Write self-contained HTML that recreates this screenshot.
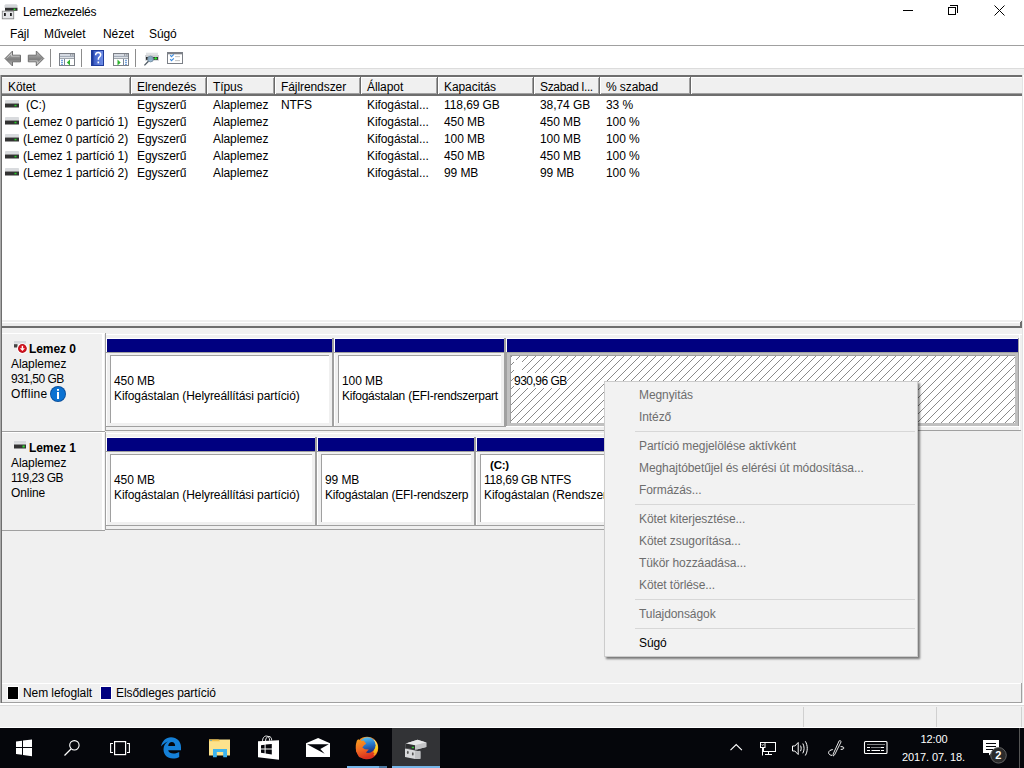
<!DOCTYPE html>
<html><head><meta charset="utf-8">
<style>
*{margin:0;padding:0;box-sizing:border-box}
html,body{width:1024px;height:768px;overflow:hidden;background:#f0f0f0;font-family:"Liberation Sans",sans-serif;font-size:12px;color:#000}
.a{position:absolute}
.t{position:absolute;font-size:12px;line-height:12px;white-space:nowrap;letter-spacing:-0.08px}
.b{font-weight:bold}
.hl{position:absolute;height:1px}
.vl{position:absolute;width:1px}
</style></head><body>
<!-- title bar + menu + toolbar -->
<div class="a" style="left:0;top:0;width:1024px;height:68px;background:#fff"></div>
<div id="title">
<svg class="a" style="left:0;top:0" width="20" height="20" viewBox="0 0 20 20">
 <path d="M5.5 4.2h11l1 1.3v2.5h-13v-2.5z" fill="#d3d5d8"/>
 <rect x="5" y="7.8" width="12.5" height="3" fill="#303030"/>
 <rect x="13.6" y="8.6" width="1.8" height="1.6" fill="#2ee02e"/>
 <rect x="2.3" y="11.2" width="11.4" height="7.6" fill="#e4e5e7" stroke="#8c8c8c" stroke-width="0.9"/>
 <rect x="4" y="13" width="1.8" height="3" fill="#1e1e1e"/>
 <rect x="10" y="13" width="1.8" height="3" fill="#1e1e1e"/>
</svg>
<div class="t" style="left:23px;top:6px;letter-spacing:-0.3px">Lemezkezelés</div>
<!-- window controls -->
<div class="hl" style="left:903px;top:10px;width:10px;background:#000"></div>
<div class="a" style="left:948px;top:7px;width:8px;height:8px;border:1px solid #000"></div>
<div class="a" style="left:950px;top:5px;width:8px;height:8px;border-top:1px solid #000;border-right:1px solid #000"></div>
<svg class="a" style="left:994px;top:5px" width="11" height="11" viewBox="0 0 11 11"><path d="M0.5 0.5L10.5 10.5M10.5 0.5L0.5 10.5" stroke="#000" stroke-width="1"/></svg>
</div>
<div id="menu">
<div class="t" style="left:10px;top:28px">Fájl</div>
<div class="t" style="left:44px;top:28px">Művelet</div>
<div class="t" style="left:103px;top:28px">Nézet</div>
<div class="t" style="left:149px;top:28px">Súgó</div>
</div>
<div class="hl" style="left:0;top:45px;width:1024px;background:#a0a0a0"></div>
<div class="hl" style="left:0;top:68px;width:1024px;background:#dcdcdc"></div>
<div id="toolbar">
<svg class="a" style="left:4px;top:50px" width="18" height="17" viewBox="0 0 18 17">
 <defs><linearGradient id="ag" x1="0" y1="0" x2="0" y2="1"><stop offset="0" stop-color="#c4c4c4"/><stop offset="0.55" stop-color="#7e7e7e"/><stop offset="1" stop-color="#bdbdbd"/></linearGradient></defs>
 <path d="M1 8.5L8.5 1V5.2H16.5V11.8H8.5V16z" fill="url(#ag)" stroke="#6f6f6f" stroke-width="1" stroke-linejoin="round"/><path d="M2.6 8.5L7.5 3.5V6.2H15.5" fill="none" stroke="#fff" stroke-opacity="0.55" stroke-width="0.7"/>
</svg>
<svg class="a" style="left:27px;top:50px" width="18" height="17" viewBox="0 0 18 17">
 <path d="M16.8 8.5L9.3 1V5.2H1.3V11.8H9.3V16z" fill="url(#ag)" stroke="#6f6f6f" stroke-width="1" stroke-linejoin="round"/><path d="M15.2 8.5L10.3 13.5V10.8H2.3" fill="none" stroke="#fff" stroke-opacity="0.55" stroke-width="0.7"/>
</svg>
<div class="vl" style="left:50px;top:49px;height:18px;background:#8c8c8c"></div>
<svg class="a" style="left:59px;top:53px" width="17" height="14" viewBox="0 0 17 14">
 <rect x="0.5" y="0.5" width="15" height="12" fill="#fff" stroke="#7c8087"/>
 <rect x="1" y="1" width="14" height="2" fill="#d5dae2"/><rect x="11" y="1.3" width="1.3" height="1.3" fill="#7c8087"/><rect x="13.2" y="1.3" width="1.3" height="1.3" fill="#7c8087"/>
 <rect x="1" y="3" width="14" height="0.8" fill="#7f8a9a"/><rect x="1" y="3.8" width="14" height="1.4" fill="#dfe3e8"/><rect x="1" y="5.2" width="14" height="0.8" fill="#8a929c"/>
 <rect x="5" y="6" width="1" height="7" fill="#76849a"/>
 <rect x="2" y="6.8" width="2" height="0.9" fill="#3d7fd1"/><rect x="2" y="8.8" width="2" height="0.9" fill="#3d7fd1"/><rect x="2" y="10.8" width="2" height="0.9" fill="#3d7fd1"/>
 <path d="M11 6.5v6l-3.2-3z" fill="#2fb52f"/>
</svg>
<div class="vl" style="left:81px;top:49px;height:18px;background:#8c8c8c"></div>
<svg class="a" style="left:91px;top:50px" width="14" height="17" viewBox="0 0 14 17">
 <defs><linearGradient id="hg" x1="0" y1="0" x2="1" y2="0"><stop offset="0" stop-color="#3b5cc4"/><stop offset="1" stop-color="#6f8ee6"/></linearGradient></defs>
 <rect x="0" y="0" width="13" height="16" fill="#1f3c9c"/>
 <rect x="2.5" y="1" width="9.5" height="14" fill="url(#hg)"/>
 <path d="M4.6 5.2c0-1.8 1.1-2.8 2.6-2.8c1.5 0 2.5 1 2.5 2.4c0 1.2-0.6 1.8-1.4 2.4c-0.7 0.5-0.9 0.9-0.9 1.8v0.8" fill="none" stroke="#fff" stroke-width="1.5"/>
 <rect x="6.5" y="11.5" width="1.6" height="1.8" fill="#fff"/>
</svg>
<svg class="a" style="left:113px;top:53px" width="17" height="14" viewBox="0 0 17 14">
 <rect x="0.5" y="0.5" width="15" height="12" fill="#fff" stroke="#7c8087"/>
 <rect x="1" y="1" width="14" height="2" fill="#d5dae2"/><rect x="11" y="1.3" width="1.3" height="1.3" fill="#7c8087"/><rect x="13.2" y="1.3" width="1.3" height="1.3" fill="#7c8087"/>
 <rect x="1" y="3" width="14" height="0.8" fill="#7f8a9a"/><rect x="1" y="3.8" width="14" height="1.4" fill="#dfe3e8"/><rect x="1" y="5.2" width="14" height="0.8" fill="#8a929c"/>
 <rect x="10" y="6" width="1" height="7" fill="#76849a"/>
 <rect x="12" y="6.8" width="2" height="0.9" fill="#3d7fd1"/><rect x="12" y="8.8" width="2" height="0.9" fill="#3d7fd1"/><rect x="12" y="10.8" width="2" height="0.9" fill="#3d7fd1"/>
 <path d="M4.5 6.5v6l3.2-3z" fill="#2fb52f"/>
</svg>
<div class="vl" style="left:135px;top:49px;height:18px;background:#8c8c8c"></div>
<svg class="a" style="left:140px;top:48px" width="48" height="20" viewBox="0 0 48 20">
 <rect x="6" y="4.7" width="12" height="2.5" fill="#dfe1e3"/>
 <rect x="5" y="7" width="14" height="5.7" fill="#cfd1d4"/>
 <rect x="6" y="9" width="12" height="2.8" fill="#2a2a2a"/>
 <path d="M14.2 10.4h3M15.7 9v2.8" stroke="#2de02d" stroke-width="1.1"/>
 <circle cx="10.5" cy="11" r="2.9" fill="#8fb4cf" fill-opacity="0.9" stroke="#6d8597" stroke-width="0.8"/>
 <path d="M8.4 13.2L4.4 17.4" stroke="#4f5a63" stroke-width="1.3"/>
 <rect x="27.5" y="4.5" width="15" height="11" fill="#fff" stroke="#7c8087"/>
 <rect x="28" y="5" width="14" height="1.3" fill="#7c8087"/>
 <path d="M30.2 7.2l1.3 1.5l2.3-2.4M30.2 11.2l1.3 1.5l2.3-2.4" stroke="#3d8ce0" fill="none" stroke-width="1.1"/>
 <rect x="35" y="8.2" width="5" height="0.9" fill="#bdbdbd"/><rect x="35" y="12.2" width="5" height="0.9" fill="#bdbdbd"/>
</svg>
</div>


<!-- list view -->
<div class="a" style="left:1px;top:75px;width:1022px;height:253px;background:#fff;border-top:2px solid #6e6e6e;border-left:1px solid #6e6e6e;border-right:1px solid #dcdcdc"></div>
<div class="a" style="left:2px;top:77px;width:1020px;height:19px;background:#f0f0f0;border-top:1px solid #fff;border-bottom:2px solid #6e6e6e"></div>
<div id="hdr">
<div class="hl" style="left:2px;top:93px;width:1020px;background:#a0a0a0"></div>
<div class="t" style="left:8px;top:81px">Kötet</div>
<div class="t" style="left:137px;top:81px">Elrendezés</div>
<div class="t" style="left:213px;top:81px">Típus</div>
<div class="t" style="left:281px;top:81px">Fájlrendszer</div>
<div class="t" style="left:367px;top:81px">Állapot</div>
<div class="t" style="left:444px;top:81px">Kapacitás</div>
<div class="t" style="left:540px;top:81px;letter-spacing:-0.35px">Szabad l...</div>
<div class="t" style="left:606px;top:81px">% szabad</div>
<div class="vl" style="left:129px;top:78px;height:16px;background:#a0a0a0"></div><div class="vl" style="left:130px;top:77px;height:18px;background:#696969"></div><div class="vl" style="left:131px;top:77px;height:17px;background:#fff"></div>
<div class="vl" style="left:205px;top:78px;height:16px;background:#a0a0a0"></div><div class="vl" style="left:206px;top:77px;height:18px;background:#696969"></div><div class="vl" style="left:207px;top:77px;height:17px;background:#fff"></div>
<div class="vl" style="left:273px;top:78px;height:16px;background:#a0a0a0"></div><div class="vl" style="left:274px;top:77px;height:18px;background:#696969"></div><div class="vl" style="left:275px;top:77px;height:17px;background:#fff"></div>
<div class="vl" style="left:359px;top:78px;height:16px;background:#a0a0a0"></div><div class="vl" style="left:360px;top:77px;height:18px;background:#696969"></div><div class="vl" style="left:361px;top:77px;height:17px;background:#fff"></div>
<div class="vl" style="left:436px;top:78px;height:16px;background:#a0a0a0"></div><div class="vl" style="left:437px;top:77px;height:18px;background:#696969"></div><div class="vl" style="left:438px;top:77px;height:17px;background:#fff"></div>
<div class="vl" style="left:532px;top:78px;height:16px;background:#a0a0a0"></div><div class="vl" style="left:533px;top:77px;height:18px;background:#696969"></div><div class="vl" style="left:534px;top:77px;height:17px;background:#fff"></div>
<div class="vl" style="left:598px;top:78px;height:16px;background:#a0a0a0"></div><div class="vl" style="left:599px;top:77px;height:18px;background:#696969"></div><div class="vl" style="left:600px;top:77px;height:17px;background:#fff"></div>
<div class="vl" style="left:689px;top:78px;height:16px;background:#a0a0a0"></div><div class="vl" style="left:690px;top:77px;height:18px;background:#696969"></div><div class="vl" style="left:691px;top:77px;height:17px;background:#fff"></div>
</div>
<div id="rows">
<svg class="a" style="left:5px;top:100px" width="14" height="8" viewBox="0 0 14 8"><rect x="0" y="0" width="14" height="3.5" rx="0.8" fill="#d9dbde"/><rect x="0" y="3.5" width="14" height="4" fill="#333"/><rect x="9.5" y="4.8" width="2" height="1.5" fill="#22d022"/></svg>
<div class="t" style="left:26px;top:99px">(C:)</div>
<div class="t" style="left:137px;top:99px">Egyszerű</div>
<div class="t" style="left:213px;top:99px">Alaplemez</div>
<div class="t" style="left:281px;top:99px">NTFS</div>
<div class="t" style="left:367px;top:99px">Kifogástal...</div>
<div class="t" style="left:444px;top:99px">118,69 GB</div>
<div class="t" style="left:540px;top:99px">38,74 GB</div>
<div class="t" style="left:606px;top:99px">33 %</div>
<svg class="a" style="left:5px;top:117px" width="14" height="8" viewBox="0 0 14 8"><rect x="0" y="0" width="14" height="3.5" rx="0.8" fill="#d9dbde"/><rect x="0" y="3.5" width="14" height="4" fill="#333"/><rect x="9.5" y="4.8" width="2" height="1.5" fill="#22d022"/></svg>
<div class="t" style="left:23px;top:116px">(Lemez 0 partíció 1)</div>
<div class="t" style="left:137px;top:116px">Egyszerű</div>
<div class="t" style="left:213px;top:116px">Alaplemez</div>
<div class="t" style="left:367px;top:116px">Kifogástal...</div>
<div class="t" style="left:444px;top:116px">450 MB</div>
<div class="t" style="left:540px;top:116px">450 MB</div>
<div class="t" style="left:606px;top:116px">100 %</div>
<svg class="a" style="left:5px;top:134px" width="14" height="8" viewBox="0 0 14 8"><rect x="0" y="0" width="14" height="3.5" rx="0.8" fill="#d9dbde"/><rect x="0" y="3.5" width="14" height="4" fill="#333"/><rect x="9.5" y="4.8" width="2" height="1.5" fill="#22d022"/></svg>
<div class="t" style="left:23px;top:133px">(Lemez 0 partíció 2)</div>
<div class="t" style="left:137px;top:133px">Egyszerű</div>
<div class="t" style="left:213px;top:133px">Alaplemez</div>
<div class="t" style="left:367px;top:133px">Kifogástal...</div>
<div class="t" style="left:444px;top:133px">100 MB</div>
<div class="t" style="left:540px;top:133px">100 MB</div>
<div class="t" style="left:606px;top:133px">100 %</div>
<svg class="a" style="left:5px;top:151px" width="14" height="8" viewBox="0 0 14 8"><rect x="0" y="0" width="14" height="3.5" rx="0.8" fill="#d9dbde"/><rect x="0" y="3.5" width="14" height="4" fill="#333"/><rect x="9.5" y="4.8" width="2" height="1.5" fill="#22d022"/></svg>
<div class="t" style="left:23px;top:150px">(Lemez 1 partíció 1)</div>
<div class="t" style="left:137px;top:150px">Egyszerű</div>
<div class="t" style="left:213px;top:150px">Alaplemez</div>
<div class="t" style="left:367px;top:150px">Kifogástal...</div>
<div class="t" style="left:444px;top:150px">450 MB</div>
<div class="t" style="left:540px;top:150px">450 MB</div>
<div class="t" style="left:606px;top:150px">100 %</div>
<svg class="a" style="left:5px;top:168px" width="14" height="8" viewBox="0 0 14 8"><rect x="0" y="0" width="14" height="3.5" rx="0.8" fill="#d9dbde"/><rect x="0" y="3.5" width="14" height="4" fill="#333"/><rect x="9.5" y="4.8" width="2" height="1.5" fill="#22d022"/></svg>
<div class="t" style="left:23px;top:167px">(Lemez 1 partíció 2)</div>
<div class="t" style="left:137px;top:167px">Egyszerű</div>
<div class="t" style="left:213px;top:167px">Alaplemez</div>
<div class="t" style="left:367px;top:167px">Kifogástal...</div>
<div class="t" style="left:444px;top:167px">99 MB</div>
<div class="t" style="left:540px;top:167px">99 MB</div>
<div class="t" style="left:606px;top:167px">100 %</div>
</div>

<!-- graphical view -->
<div id="graph">
<div class="hl" style="left:2px;top:320px;width:1020px;background:#efefef"></div>
<div class="hl" style="left:2px;top:321px;width:1020px;background:#efefef"></div>
<div class="hl" style="left:2px;top:322px;width:1021px;background:#fff"></div>
<div class="a" style="left:2px;top:323px;width:1020px;height:3px;background:#ececec;"></div>
<div class="vl" style="left:1020px;top:322px;height:5px;background:#6e6e6e"></div>
<div class="vl" style="left:1021px;top:321px;height:6px;background:#6e6e6e"></div>
<div class="a" style="left:0px;top:326px;width:1022px;height:2px;background:#6e6e6e;"></div>
<div class="vl" style="left:0px;top:75px;height:629px;background:#a9a9a9"></div>
<div class="vl" style="left:1px;top:75px;height:629px;background:#6e6e6e"></div>
<div class="vl" style="left:1022px;top:75px;height:629px;background:#e3e3e3"></div>
<div class="vl" style="left:1023px;top:75px;height:629px;background:#fff"></div>
<div class="hl" style="left:2px;top:702px;width:1020px;background:#a0a0a0"></div>
<div class="hl" style="left:0px;top:703px;width:1024px;background:#fff"></div>
<div class="hl" style="left:0px;top:704px;width:1024px;background:#fff"></div>
<div class="hl" style="left:0px;top:705px;width:1024px;background:#dcdcdc"></div>
<div class="hl" style="left:2px;top:333px;width:103px;background:#fff"></div>
<div class="a" style="left:2px;top:334px;width:102px;height:97px;background:#f0f0f0;"></div>
<div class="vl" style="left:102px;top:334px;height:97px;background:#fff"></div>
<div class="vl" style="left:103px;top:334px;height:97px;background:#fff"></div>
<div class="hl" style="left:2px;top:431px;width:103px;background:#a0a0a0"></div>
<div class="hl" style="left:2px;top:432px;width:103px;background:#fff"></div>
<div class="vl" style="left:105px;top:333px;height:98px;background:#a0a0a0"></div>
<div class="hl" style="left:106px;top:334px;width:916px;background:#fff"></div>
<div class="hl" style="left:105px;top:430px;width:916px;background:#a0a0a0"></div>
<div class="vl" style="left:1019px;top:334px;height:96px;background:#fff"></div>
<svg class="a" style="left:13px;top:340px" width="16" height="15" viewBox="0 0 16 15"><rect x="1" y="1" width="12" height="2.6" fill="#d6d8dc"/><rect x="1" y="4.2" width="3.5" height="3.3" fill="#444"/><circle cx="9.4" cy="8.5" r="5.3" fill="#fff"/><circle cx="9.4" cy="8.5" r="4.4" fill="#b8101c"/><circle cx="9.4" cy="8.3" r="3.4" fill="#d8141f"/><rect x="8.7" y="5.8" width="1.4" height="3" fill="#fff"/><path d="M6.9 8.2H11.9L9.4 10.9z" fill="#fff"/></svg>
<div class="t" style="left:29px;top:343px;font-weight:bold">Lemez 0</div>
<div class="t" style="left:11px;top:358px;">Alaplemez</div>
<div class="t" style="left:11px;top:373px;letter-spacing:-0.5px">931,50 GB</div>
<div class="t" style="left:11px;top:388px;letter-spacing:0.3px">Offline</div>
<svg class="a" style="left:50px;top:386px" width="16" height="16" viewBox="0 0 16 16"><circle cx="8" cy="8" r="8" fill="#0a4f9c"/><circle cx="8" cy="8" r="7.1" fill="#0b72d2"/><rect x="7" y="6" width="2" height="7" fill="#fff"/><rect x="7" y="3" width="2" height="1.8" fill="#fff"/></svg>
<div class="hl" style="left:106px;top:338px;width:226px;background:#fff"></div>
<div class="vl" style="left:106px;top:338px;height:15px;background:#fff"></div>
<div class="a" style="left:107px;top:339px;width:225px;height:13px;background:#000080;"></div>
<div class="hl" style="left:106px;top:352px;width:228px;background:#a0a0a0"></div>
<div class="a" style="left:332px;top:338px;width:2px;height:89px;background:#a0a0a0;"></div>
<div class="vl" style="left:106px;top:353px;height:73px;background:#fff"></div>
<div class="hl" style="left:106px;top:426px;width:228px;background:#a0a0a0"></div>
<div class="a" style="left:110px;top:355px;width:219px;height:68px;background:#fff;border-top:1px solid #a0a0a0;border-left:1px solid #a0a0a0;overflow:hidden"><div class="t" style="left:3px;top:19px;">450 MB</div><div class="t" style="left:3px;top:34px;">Kifogástalan (Helyreállítási partíció)</div></div>
<div class="hl" style="left:334px;top:338px;width:170px;background:#fff"></div>
<div class="vl" style="left:334px;top:338px;height:15px;background:#fff"></div>
<div class="a" style="left:335px;top:339px;width:169px;height:13px;background:#000080;"></div>
<div class="hl" style="left:334px;top:352px;width:172px;background:#a0a0a0"></div>
<div class="a" style="left:504px;top:338px;width:2px;height:89px;background:#a0a0a0;"></div>
<div class="vl" style="left:334px;top:353px;height:73px;background:#fff"></div>
<div class="hl" style="left:334px;top:426px;width:172px;background:#a0a0a0"></div>
<div class="a" style="left:338px;top:355px;width:163px;height:68px;background:#fff;border-top:1px solid #a0a0a0;border-left:1px solid #a0a0a0;overflow:hidden"><div class="t" style="left:3px;top:19px;">100 MB</div><div class="t" style="left:3px;top:34px;"><span style="letter-spacing:-0.25px">Kifogástalan (EFI-rendszerpart</span></div></div>
<div class="hl" style="left:506px;top:338px;width:512px;background:#fff"></div>
<div class="vl" style="left:506px;top:338px;height:15px;background:#fff"></div>
<div class="a" style="left:507px;top:339px;width:511px;height:13px;background:#000080;"></div>
<div class="hl" style="left:506px;top:352px;width:513px;background:#a0a0a0"></div>
<div class="a" style="left:1018px;top:338px;width:1px;height:89px;background:#a0a0a0;"></div>
<div class="a" style="left:506px;top:353px;width:512px;height:73px;background:#c0c0c0;"></div>
<div class="vl" style="left:506px;top:353px;height:73px;background:#a0a0a0"></div>
<div class="hl" style="left:506px;top:426px;width:513px;background:#fff"></div>
<svg class="a" style="left:510px;top:355px" width="505" height="68"><defs><pattern id="hatch" width="8" height="8" patternUnits="userSpaceOnUse" x="6" y="5"><path d="M0 8L8 0" stroke="#8a8a8a" stroke-width="1" shape-rendering="crispEdges" stroke-dasharray="1 0.5"/></pattern></defs><rect width="505" height="68" fill="#fff"/><rect width="505" height="68" fill="url(#hatch)"/><rect x="0" y="0" width="505" height="1" fill="#a0a0a0"/><rect x="0" y="0" width="1" height="68" fill="#a0a0a0"/></svg>
<div class="a" style="left:514px;top:373px;width:53px;height:15px;background:#fff;"></div>
<div class="a" style="left:514px;top:360px;width:8px;height:13px;background:#fff;"></div>
<div class="t" style="left:514px;top:375px;letter-spacing:-0.5px">930,96 GB</div>
<div class="hl" style="left:2px;top:432px;width:103px;background:#fff"></div>
<div class="a" style="left:2px;top:433px;width:102px;height:97px;background:#f0f0f0;"></div>
<div class="vl" style="left:102px;top:433px;height:97px;background:#fff"></div>
<div class="vl" style="left:103px;top:433px;height:97px;background:#fff"></div>
<div class="hl" style="left:2px;top:530px;width:103px;background:#a0a0a0"></div>

<div class="vl" style="left:105px;top:432px;height:98px;background:#a0a0a0"></div>
<div class="hl" style="left:106px;top:433px;width:800px;background:#fff"></div>
<div class="hl" style="left:105px;top:529px;width:779px;background:#a0a0a0"></div>
<svg class="a" style="left:13px;top:440px" width="14" height="10" viewBox="0 0 14 10"><rect x="1" y="1" width="12" height="3.5" fill="#d8dadd"/><rect x="0.5" y="3.5" width="13" height="1" fill="#e6e7e9"/><rect x="1" y="4.5" width="12" height="4" fill="#333"/><rect x="9.5" y="5.5" width="2.2" height="2" fill="#30e030"/></svg>
<div class="t" style="left:29px;top:442px;font-weight:bold">Lemez 1</div>
<div class="t" style="left:11px;top:457px;">Alaplemez</div>
<div class="t" style="left:11px;top:472px;letter-spacing:-0.5px">119,23 GB</div>
<div class="t" style="left:11px;top:487px;">Online</div>
<div class="hl" style="left:106px;top:437px;width:209px;background:#fff"></div>
<div class="vl" style="left:106px;top:437px;height:15px;background:#fff"></div>
<div class="a" style="left:107px;top:438px;width:208px;height:13px;background:#000080;"></div>
<div class="hl" style="left:106px;top:451px;width:211px;background:#a0a0a0"></div>
<div class="a" style="left:315px;top:437px;width:2px;height:89px;background:#a0a0a0;"></div>
<div class="vl" style="left:106px;top:452px;height:73px;background:#fff"></div>
<div class="hl" style="left:106px;top:525px;width:211px;background:#a0a0a0"></div>
<div class="a" style="left:110px;top:454px;width:202px;height:68px;background:#fff;border-top:1px solid #a0a0a0;border-left:1px solid #a0a0a0;overflow:hidden"><div class="t" style="left:3px;top:19px;">450 MB</div><div class="t" style="left:3px;top:34px;">Kifogástalan (Helyreállítási partíció)</div></div>
<div class="hl" style="left:317px;top:437px;width:157px;background:#fff"></div>
<div class="vl" style="left:317px;top:437px;height:15px;background:#fff"></div>
<div class="a" style="left:318px;top:438px;width:156px;height:13px;background:#000080;"></div>
<div class="hl" style="left:317px;top:451px;width:159px;background:#a0a0a0"></div>
<div class="a" style="left:474px;top:437px;width:2px;height:89px;background:#a0a0a0;"></div>
<div class="vl" style="left:317px;top:452px;height:73px;background:#fff"></div>
<div class="hl" style="left:317px;top:525px;width:159px;background:#a0a0a0"></div>
<div class="a" style="left:321px;top:454px;width:150px;height:68px;background:#fff;border-top:1px solid #a0a0a0;border-left:1px solid #a0a0a0;overflow:hidden"><div class="t" style="left:3px;top:19px;">99 MB</div><div class="t" style="left:3px;top:34px;"><span style="letter-spacing:-0.23px">Kifogástalan (EFI-rendszerp</span></div></div>
<div class="hl" style="left:476px;top:437px;width:405px;background:#fff"></div>
<div class="vl" style="left:476px;top:437px;height:15px;background:#fff"></div>
<div class="a" style="left:477px;top:438px;width:404px;height:13px;background:#000080;"></div>
<div class="hl" style="left:476px;top:451px;width:406px;background:#a0a0a0"></div>
<div class="a" style="left:881px;top:437px;width:1px;height:89px;background:#a0a0a0;"></div>
<div class="vl" style="left:476px;top:452px;height:73px;background:#fff"></div>
<div class="hl" style="left:476px;top:525px;width:406px;background:#a0a0a0"></div>
<div class="a" style="left:480px;top:454px;width:398px;height:68px;background:#fff;border-top:1px solid #a0a0a0;border-left:1px solid #a0a0a0;overflow:hidden"><div class="t" style="left:9px;top:4px;font-weight:bold;font-size:11.5px;letter-spacing:-0.2px">(C:)</div><div class="t" style="left:3px;top:19px;"><span style="letter-spacing:-0.3px">118,69 GB NTFS</span></div><div class="t" style="left:3px;top:34px;">Kifogástalan (Rendszerindító, Lapozófájl, Összeomlási memóriakép, Elsődleges partíció)</div></div>
</div>
<!-- legend/status -->
<div id="status">
<div class="hl" style="left:2px;top:683px;width:1019px;background:#fff"></div>
<div class="vl" style="left:1021px;top:683px;height:20px;background:#a0a0a0"></div>
<div class="a" style="left:7px;top:686px;width:12px;height:14px;background:#fff;"></div>
<div class="a" style="left:8px;top:687px;width:10px;height:12px;background:#000;"></div>
<div class="t" style="left:23px;top:687px;">Nem lefoglalt</div>
<div class="a" style="left:100px;top:686px;width:12px;height:14px;background:#fff;"></div>
<div class="a" style="left:101px;top:687px;width:10px;height:12px;background:#000080;"></div>
<div class="t" style="left:116px;top:687px;">Elsődleges partíció</div>
<div class="vl" style="left:803px;top:707px;height:20px;background:#d0d0d0"></div>
<div class="vl" style="left:936px;top:707px;height:20px;background:#d0d0d0"></div>
<div class="vl" style="left:1021px;top:707px;height:20px;background:#d0d0d0"></div>
<div class="hl" style="left:0px;top:727px;width:1024px;background:#fff"></div>
</div>
<!-- context menu -->
<div id="ctx">
<div class="a" style="left:604px;top:381px;width:314px;height:276px;background:#f2f2f2;border:1px solid #cccccc;box-shadow:2px 2px 2px rgba(0,0,0,0.5)"></div>
<div class="t" style="left:639px;top:389px;color:#6d6d6d">Megnyitás</div>
<div class="t" style="left:639px;top:411px;color:#6d6d6d">Intéző</div>
<div class="hl" style="left:635px;top:431px;width:280px;background:#d7d7d7"></div>
<div class="t" style="left:639px;top:440px;color:#6d6d6d">Partíció megjelölése aktívként</div>
<div class="t" style="left:639px;top:462px;color:#6d6d6d">Meghajtóbetűjel és elérési út módosítása...</div>
<div class="t" style="left:639px;top:484px;color:#6d6d6d">Formázás...</div>
<div class="hl" style="left:635px;top:504px;width:280px;background:#d7d7d7"></div>
<div class="t" style="left:639px;top:513px;color:#6d6d6d">Kötet kiterjesztése...</div>
<div class="t" style="left:639px;top:535px;color:#6d6d6d">Kötet zsugorítása...</div>
<div class="t" style="left:639px;top:557px;color:#6d6d6d">Tükör hozzáadása...</div>
<div class="t" style="left:639px;top:579px;color:#6d6d6d">Kötet törlése...</div>
<div class="hl" style="left:635px;top:599px;width:280px;background:#d7d7d7"></div>
<div class="t" style="left:639px;top:608px;color:#6d6d6d">Tulajdonságok</div>
<div class="hl" style="left:635px;top:628px;width:280px;background:#d7d7d7"></div>
<div class="t" style="left:639px;top:637px;color:#000">Súgó</div>
</div>
<!-- taskbar -->
<div class="a" style="left:0;top:728px;width:1024px;height:40px;background:#05060b"></div>
<div id="taskbar">
<svg class="a" style="left:0;top:728px" width="1024" height="40" viewBox="0 728 1024 40"><path d="M16 741.6L22 740.8V747H16z M23 740.6L32 739.6V747H23z M16 748H22V754.8L16 754z M23 748H32V756.2L23 755z" fill="#fff"/><circle cx="74.4" cy="745.3" r="4.7" fill="none" stroke="#fff" stroke-width="1.1"/><path d="M71 749L64.5 755.5" stroke="#fff" stroke-width="1.2"/><rect x="114.6" y="741.6" width="11" height="13" fill="none" stroke="#fff" stroke-width="1.2"/><path d="M113 743.5H110.6V752.5H113 M127 743.5H129.4V752.5H127" fill="none" stroke="#fff" stroke-width="1.1"/><g transform="translate(158 734)"><path fill-rule="evenodd" d="M13 3.3C18.8 3.3 23 7.5 23 13.2V16.2H10.2C10.6 18.6 13 19.5 15.5 19.5C17.8 19.5 19.8 18.8 21.2 18V23C19.5 24.1 17.2 24.6 15 24.6C9.2 24.6 5.5 20.6 5.5 15.3C5.5 11.5 7.5 9 10 7.5C7.5 8.2 5 10.2 3.1 12.4C4 7.2 8 3.3 13 3.3z M10.2 12C10.5 9.5 12 8 13.8 8C15.8 8 17 9.5 17.2 12z" fill="#1580d8"/></g><rect x="209" y="739.5" width="21" height="16" fill="#fde28c"/><path d="M209 739.5h9.5l1.5 1.7h-11z" fill="#f2c04a"/><rect x="210.2" y="740" width="1.6" height="0.9" fill="#49a6d6"/><path d="M213 757.2V749H227V757.2H223.2V752H216.8V757.2z" fill="#3db4ee"/><path d="M258 741.3L279 740.2V759.8L258 757.2z" fill="#fff"/><path d="M262.5 741.5c0-4 2-5.5 3.8-5.5c1.8 0 3.4 1.5 3.4 4.8 M265.5 741.2c0-3.3 1.8-4.8 3.4-4.8c1.7 0 2.8 1.6 2.8 4" fill="none" stroke="#fff" stroke-width="0.9"/><path d="M261 745.2L264.6 744.8V748.4H261z M265.6 744.6L271.8 744V748.4H265.6z M261 749.4H264.6V753.3L261 752.8z M265.6 749.4H271.8V754.4L265.6 753.5z" fill="#05060b"/><path d="M306 743.2L318.1 737.9L330 743.2V757H306z" fill="#fff"/><path d="M307 744.2H328.8L320.3 748.9L324.7 753.7z" fill="#05060b"/></svg>
<div class="a" style="left:392px;top:728px;width:48px;height:40px;background:#323336"></div>
<div class="a" style="left:347px;top:766px;width:32px;height:2px;background:#75b5e8"></div>
<div class="a" style="left:379px;top:766px;width:8px;height:2px;background:#4d7aa3"></div>
<div class="a" style="left:392px;top:766px;width:48px;height:2px;background:#75b5e8"></div>
<svg class="a" style="left:352px;top:734px" width="30" height="28" viewBox="0 0 30 28"><defs><linearGradient id="ffo" x1="0" y1="0" x2="0.3" y2="1"><stop offset="0" stop-color="#f7a11f"/><stop offset="0.55" stop-color="#f26a22"/><stop offset="1" stop-color="#d9301e"/></linearGradient><linearGradient id="ffb" x1="0" y1="0" x2="0.2" y2="1"><stop offset="0" stop-color="#64cff8"/><stop offset="0.5" stop-color="#2a7fd0"/><stop offset="1" stop-color="#1a3288"/></linearGradient><linearGradient id="ffy" x1="0" y1="0" x2="0" y2="1"><stop offset="0" stop-color="#fbe8a0"/><stop offset="0.5" stop-color="#ffd51a"/><stop offset="1" stop-color="#f39a1c"/></linearGradient></defs><circle cx="15" cy="14" r="11.2" fill="url(#ffo)"/><path d="M22 5.5c2.5 2.2 4 5.2 4 8.5c0 3-1.3 5.8-3.4 7.7l-3-2c1.8-1.6 2.7-3.6 2.7-5.8c0-2.8-1-5-2.6-6.6z" fill="url(#ffy)"/><circle cx="15.6" cy="11.2" r="8" fill="url(#ffb)"/><path d="M4.8 6.8L6.3 5.1L7.6 6.9L11.7 6.4L14.2 9.7L12.4 11L10.3 13.4L12.8 15.3L16.8 15.6L13.9 18.6L18.2 19.4L21 18L22.6 19.2L20 22.6L14 25.2L7 23L4 17L3.8 11z" fill="url(#ffo)"/></svg>
<svg class="a" style="left:400px;top:734px" width="32" height="28" viewBox="0 0 32 28"><path d="M5.8 9.5L17.5 5.8L26.3 8.4V13L17 15.5L5.8 14z" fill="#cfd0d2"/><path d="M5.8 9.5L17.5 5.8L26.3 8.4L15 11.2z" fill="#e6e7e8"/><path d="M15 11.2L26.3 8.4V13L15 15.8z" fill="#c2c3c5"/><path d="M5.8 9.5L15 11.2V15.8L5.8 14z" fill="#2e2f31"/><rect x="11.8" y="12.8" width="2.2" height="1.4" fill="#30c030"/><path d="M5 14.6L9 15.2L20.4 17.4V24.8L15 25L5 23z" fill="#d8d9db"/><path d="M15 17.2L20.4 16.8V24.8L15 25z" fill="#bfc0c2"/><ellipse cx="7.8" cy="18.4" rx="0.9" ry="1.6" fill="#555"/><ellipse cx="12.8" cy="19.9" rx="0.9" ry="1.6" fill="#555"/></svg>
<svg class="a" style="left:720px;top:728px" width="304" height="40" viewBox="720 728 304 40"><path d="M730.5 750.2L736.2 744.5L741.9 750.2" fill="none" stroke="#fff" stroke-width="1.1"/><rect x="763.5" y="742.5" width="12" height="9" fill="none" stroke="#fff" stroke-width="1"/><rect x="760.5" y="742.5" width="4.5" height="5" fill="#05060b" stroke="#fff" stroke-width="1"/><path d="M761.8 744.3L762.7 745.5L763.6 744.3" fill="none" stroke="#fff" stroke-width="0.8"/><path d="M762.5 747.5V755.5 M768.5 752V754.5 M765 754.5H772" stroke="#fff" stroke-width="1" fill="none"/><path d="M792.5 746H794.8L798.2 742.5V754.5L794.8 751H792.5z" fill="none" stroke="#fff" stroke-width="1"/><path d="M800.5 745.6c0.9 1.7 0.9 3.8 0 5.6 M802.8 743.5c1.7 2.8 1.7 7 0 9.8 M805.3 741.3c2.6 3.9 2.6 10.2 0 14.2" fill="none" stroke="#fff" stroke-width="1"/><path d="M839.2 740.8c0.8-0.4 1.8 0.1 1.9 1L834.6 754.8l-1.3 1.2l-0.2-1.8L839.2 740.8z" fill="none" stroke="#fff" stroke-width="0.9"/><path d="M832.8 749.6c-2.6 0.2-4.2 1.6-4.2 3.1c0 1.6 1.6 2.7 3.6 2.7 M840.6 746.6c2 0 3.3 0.6 3.3 1.4c0 0.8-1.3 1.4-3.2 1.4" fill="none" stroke="#fff" stroke-width="1"/><rect x="864.5" y="741.5" width="22.5" height="12" rx="1" fill="none" stroke="#fff" stroke-width="1.1"/><path d="M867.5 744.5h1M869.5 744.5h1M871.5 744.5h1M873.5 744.5h1M875.5 744.5h1M877.5 744.5h1M879.5 744.5h1M881.5 744.5h1M883.5 744.5h1M871.5 747.5h1M873.5 747.5h1M875.5 747.5h1M877.5 747.5h1M879.5 747.5h1M867 747.5h3M881 747.5h3M867 750.5h3M871.5 750.5h8.5M881 750.5h3" stroke="#fff" stroke-width="1" fill="none"/><path d="M983 740H999V753H991.5L989 755.5V753H983z" fill="#fff"/><path d="M986 743.5H996M986 746.5H996M986 749.5H993" stroke="#05060b" stroke-width="1"/><circle cx="998.5" cy="755.3" r="7.8" fill="#2b2b2b" stroke="#6a6a6a" stroke-width="0.9"/><rect x="1019" y="728" width="1" height="40" fill="#555"/></svg>
<div class="t" style="left:998.4px;top:750px;transform:translateX(-50%);color:#fff;font-weight:bold;font-size:11px;line-height:11px">2</div>
<div class="t" style="left:934px;top:734px;transform:translateX(-50%);color:#fff;font-size:11px;line-height:11px">12:00</div>
<div class="t" style="left:933.5px;top:752px;transform:translateX(-50%);color:#fff;font-size:11px;line-height:11px">2017. 07. 18.</div>
</div>
</body></html>
